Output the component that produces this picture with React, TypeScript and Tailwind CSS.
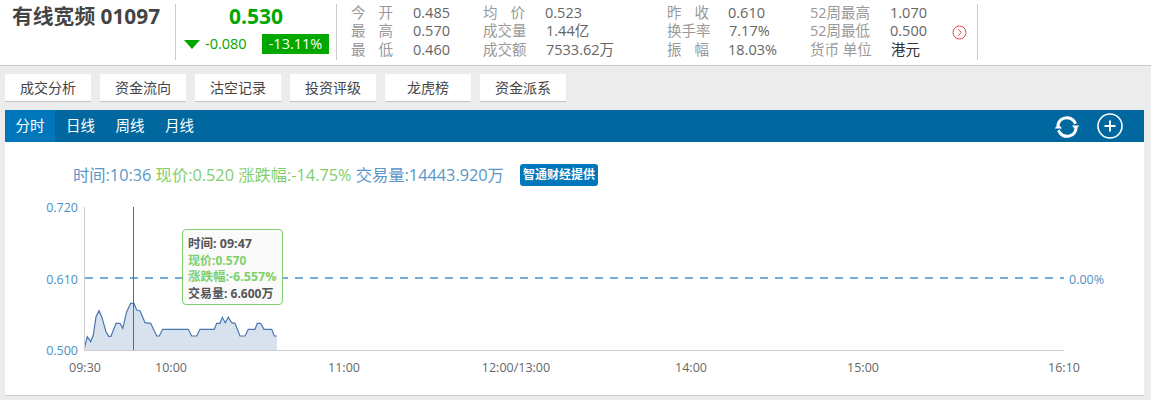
import React from "react";

const font = { fontFamily: '"Open Sans","Noto Sans CJK SC",sans-serif' };

const tabs = ["成交分析", "资金流向", "沽空记录", "投资评级", "龙虎榜", "资金派系"];
const periods = ["日线", "周线", "月线"];

const zoomed: [number, number][] = [
  [163,445],[172,410],[182,425],[190,405],[198,350],[207,332],[215,350],[228,395],[236,409],[243,409],[258,370],[270,370],[278,385],[290,335],[302,310],[312,310],[320,330],[330,332],[345,368],[362,370],[380,408],[388,408],[398,388],[475,388],[485,408],[500,408],[510,388],[553,388],[560,370],[570,370],[577,352],[586,368],[595,352],[605,368],[615,370],[630,408],[645,408],[655,388],[675,388],[682,370],[692,370],[702,388],[725,388],[733,408],[741,408],
];
const pts = zoomed.map(([x, y]) => [30 + x / 3, 200 + y / 3 - 142]);
const line = pts.map((p) => p[0].toFixed(1) + "," + p[1].toFixed(1)).join(" ");
const area = `84,208 ${line} ${pts[pts.length - 1][0].toFixed(1)},208`;

function Label({ a, b }: { a: string; b: string }) {
  return (
    <div className="flex w-[42px] justify-between text-[#999999]">
      <span>{a}</span>
      <span>{b}</span>
    </div>
  );
}
const Muted = ({ children }: { children: React.ReactNode }) => <div className="whitespace-nowrap text-[#999999]">{children}</div>;
const Val = ({ children }: { children: React.ReactNode }) => <div className="whitespace-nowrap text-[#666666]">{children}</div>;

export default function App() {
  return (
    <div className="h-[400px] w-[1151px] overflow-hidden bg-[#ececec]" style={font}>
      <header className="flex h-[66px] items-start border-b border-[#c8c8c8] bg-white pt-1">
        <div className="h-14 w-[176px] border-r border-[#cccccc] pl-3">
          <h1 className="text-[20.8px] font-bold leading-6 text-[#444444]">有线宽频 01097</h1>
        </div>
        <div className="flex h-14 w-[161px] flex-col border-r border-[#cccccc]">
          <div className="text-center text-[21px] font-bold leading-6 text-[#00a800]">0.530</div>
          <div className="mt-[6px] flex items-center pl-2">
            <svg width="16" height="9" viewBox="0 0 16 9" className="mr-[5px] shrink-0">
              <path d="M0 0H16L8 9Z" fill="#00a800" />
            </svg>
            <span className="w-[57px] text-[14.5px] leading-5 text-[#00a800]">-0.080</span>
            <span className="flex h-5 w-[67px] items-center justify-center bg-[#00a800] text-[14.5px] text-white">-13.11%</span>
          </div>
        </div>
        <div className="ml-[14px] grid w-[596px] grid-cols-[62px_70px_62px_122px_61px_82px_80px_1fr] text-[14.5px] leading-[18.3px]">
          <Label a="今" b="开" /><Val>0.485</Val>
          <Label a="均" b="价" /><Val>0.523</Val>
          <Label a="昨" b="收" /><Val>0.610</Val>
          <Muted>52周最高</Muted><Val>1.070</Val>

          <Label a="最" b="高" /><Val>0.570</Val>
          <Muted>成交量</Muted><div className="pl-[1px] text-[#666666]">1.44亿</div>
          <Muted>换手率</Muted><div className="pl-[1px] text-[#666666]">7.17%</div>
          <Muted>52周最低</Muted><Val>0.500</Val>

          <Label a="最" b="低" /><Val>0.460</Val>
          <Muted>成交额</Muted><div className="whitespace-nowrap pl-[1px] text-[#666666]">7533.62万</div>
          <Label a="振" b="幅" /><Val>18.03%</Val>
          <Muted>货币 单位</Muted><div className="pl-[1px] text-[#333333]">港元</div>
        </div>
        <div className="flex h-14 w-[31px] items-center justify-end border-r border-[#cccccc] pr-[10px]">
          <svg width="15" height="15" viewBox="0 0 15 15" fill="none" stroke="#e8474c" className="shrink-0">
            <circle cx="7.5" cy="7.5" r="6.5" />
            <path d="M6 4.2 9.2 7.5 6 10.8" />
          </svg>
        </div>
      </header>

      <nav className="mt-2 flex gap-[9px] pl-[5px]">
        {tabs.map((t) => (
          <div key={t} className="flex h-[28px] w-[86px] items-center justify-center border-b border-[#c4c4c4] bg-white text-[14px] text-[#444444]">
            {t}
          </div>
        ))}
      </nav>

      <main className="ml-[5px] mt-2 w-[1139px]">
        <div className="flex h-8 items-center bg-[#00689f] text-[14.5px] text-white">
          <div className="flex h-8 w-[50px] items-center justify-center bg-[#0077bb]">分时</div>
          <div className="flex gap-[20.5px] pl-[11px]">
            {periods.map((p) => (
              <span key={p}>{p}</span>
            ))}
          </div>
          <div className="ml-auto flex items-center gap-[16px] pr-[21px]">
            <svg width="28" height="28" viewBox="0 0 26 26" fill="none" stroke="white" strokeWidth="2.8" className="mt-[1px]">
              <path d="M4.5 12A8.5 8.5 0 0 1 19.5 7.5L21 10" />
              <path d="M21.5 14A8.5 8.5 0 0 1 6.5 18.5L5 16" />
              <path d="M17.5 11.5h7l-3.5 4z" fill="white" stroke="none" />
              <path d="M1.5 14.5h7l-3.5-4z" fill="white" stroke="none" />
            </svg>
            <svg width="26" height="26" viewBox="0 0 26 26" fill="none" stroke="white" strokeWidth="1.6">
              <circle cx="13" cy="13" r="12" />
              <path d="M13 7.5v11M7.5 13h11" strokeWidth="2" />
            </svg>
          </div>
        </div>

        <section className="relative h-[254px] border-b border-[#cfcfcf] bg-white">
          <div className="flex h-[66px] items-center whitespace-nowrap pl-[68px] text-[16.3px] text-[#5a96c8]">
            <span>时间:10:36&nbsp;</span>
            <span className="text-[#7fd06c]">现价:0.520 涨跌幅:-14.75%&nbsp;</span>
            <span>交易量:14443.920万</span>
            <span className="ml-[16px] flex h-[22px] w-[78px] items-center justify-center rounded-[3px] bg-[#0077bb] text-[12px] font-bold text-white">智通财经提供</span>
          </div>

          <svg width="1139" height="254" viewBox="5 0 1139 254" className="absolute left-0 top-0" style={{ fontFamily: font.fontFamily }}>
            <polygon points={area} fill="#d8e1ee" />
            <polyline points={line} fill="none" stroke="#4a76b2" strokeWidth="1.2" />
            <path d="M84.5 65V208.5H1064" fill="none" stroke="#cccccc" />
            <path d="M85 136H1064" fill="none" stroke="#4a90cc" strokeWidth="1.5" strokeDasharray="8 7" />
            <path d="M133.5 65V208" stroke="#3a72a8" />
            <g fontSize="12.5" fill="#5090c4" textAnchor="end">
              <text x="78" y="70">0.720</text>
              <text x="78" y="142">0.610</text>
              <text x="78" y="213">0.500</text>
            </g>
            <text x="1069" y="142" fontSize="12.5" fill="#5090c4">0.00%</text>
            <g fontSize="12.5" fill="#666666" textAnchor="middle">
              <text x="85" y="230">09:30</text>
              <text x="171" y="230">10:00</text>
              <text x="344" y="230">11:00</text>
              <text x="516" y="230">12:00/13:00</text>
              <text x="691" y="230">14:00</text>
              <text x="863" y="230">15:00</text>
              <text x="1064" y="230">16:10</text>
            </g>
          </svg>

          <div className="absolute left-[177px] top-[87px] h-[76px] w-[101px] whitespace-nowrap rounded border border-[#7fd06c] bg-[#fafafa] pl-[5px] pt-[6px] text-[12px] font-bold leading-[16.5px] text-[#555555]">
            <div className="text-[12.5px]">时间: 09:47</div>
            <div className="text-[#7fd06c]">现价:0.570</div>
            <div className="text-[12.5px] text-[#7fd06c]">涨跌幅:-6.557%</div>
            <div>交易量: 6.600万</div>
          </div>
        </section>
      </main>
    </div>
  );
}
